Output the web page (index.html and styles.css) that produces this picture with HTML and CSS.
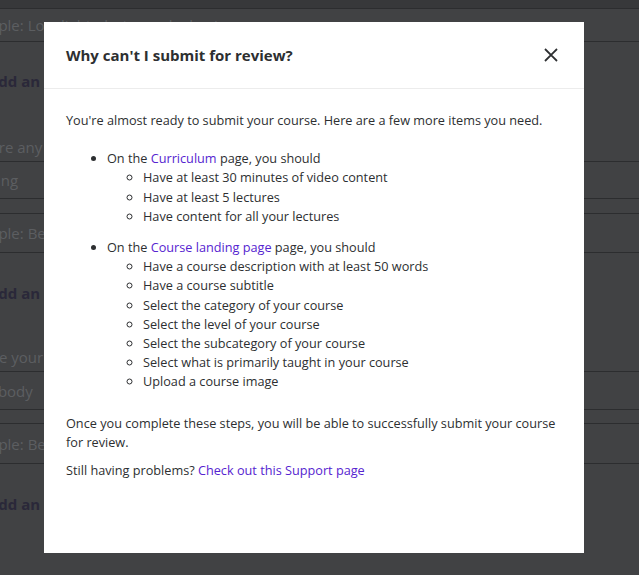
FILE: index.html
```html
<!DOCTYPE html>
<html lang="en">
<head>
    <meta charset="UTF-8">
    <meta name="viewport" content="width=device-width, initial-scale=1.0">
    <title>Intended learners</title>
    <link rel="stylesheet" href="styles.css">
</head>
<body>
    <div class="page">
        <div class="topbar"></div>
        <div class="form">
            <div class="field field-first"><span class="placeholder">Example: Low-light photography basics</span></div>
            <a class="add-link add-first"><span class="plus">+</span>Add an answer</a>
            <div class="label label-first">Share any course requirements or prerequisites</div>
            <div class="field field-a">Drawing</div>
            <div class="field field-b"><span class="placeholder">Example: Beginner photographers</span></div>
            <a class="add-link add-second"><span class="plus">+</span>Add an answer</a>
            <div class="label label-second">Rate your target students</div>
            <div class="field field-d">Everybody</div>
            <div class="field field-c"><span class="placeholder">Example: Beginner photographers</span></div>
            <a class="add-link add-third"><span class="plus">+</span>Add an answer</a>
        </div>
    </div>

    <div class="modal">
        <div class="modal-header">
            <h2>Why can't I submit for review?</h2>
            <button class="close" aria-label="Close">
                <svg width="14" height="14" viewBox="0 0 14 14">
                    <path d="M1 1 L13 13 M13 1 L1 13" stroke="#2d2f31" stroke-width="1.8" fill="none"/>
                </svg>
            </button>
        </div>
        <div class="modal-body">
            <p>You're almost ready to submit your course. Here are a few more items you need.</p>
            <ul class="steps">
                <li>On the <a href="#">Curriculum</a> page, you should
                    <ul>
                        <li>Have at least 30 minutes of video content</li>
                        <li>Have at least 5 lectures</li>
                        <li>Have content for all your lectures</li>
                    </ul>
                </li>
                <li>On the <a href="#">Course landing page</a> page, you should
                    <ul>
                        <li>Have a course description with at least 50 words</li>
                        <li>Have a course subtitle</li>
                        <li>Select the category of your course</li>
                        <li>Select the level of your course</li>
                        <li>Select the subcategory of your course</li>
                        <li>Select what is primarily taught in your course</li>
                        <li>Upload a course image</li>
                    </ul>
                </li>
            </ul>
            <p class="done">Once you complete these steps, you will be able to successfully submit your course for review.</p>
            <p class="help">Still having problems? <a href="#">Check out this Support page</a></p>
        </div>
    </div>
</body>
</html>
```

FILE: styles.css
```css
body {
    margin: 0;
    background-color: #414244;
    font-family: "Open Sans", Arial, sans-serif;
    overflow: hidden;
    height: 575px;
}
.topbar {
    height: 8px;
    background-color: #37383a;
}
.form {
    margin-left: -24px;
    width: 720px;
}
.field {
    margin-left: -33px;
    padding: 0 16px;
    border: 1px solid #2c2d2f;
    display: flex;
    align-items: center;
    font-size: 15px;
    color: #5c5e61;
    box-sizing: border-box;
}
.placeholder {
    color: #5c5e61;
}
.field-first {
    height: 34px;
}
.field-a {
    height: 38px;
}
.field-b {
    height: 40px;
    margin-top: 14px;
}
.field-d {
    height: 39px;
}
.field-c {
    height: 41px;
    margin-top: 13px;
}
.add-link {
    display: flex;
    align-items: center;
    gap: 4px;
    font-weight: bold;
    font-size: 15px;
    line-height: 20px;
    color: #2a2839;
    height: 20px;
}
.plus {
    font-size: 14px;
}
.add-first {
    margin-top: 29px;
}
.add-second {
    margin-top: 30px;
}
.add-third {
    margin-top: 30px;
}
.label {
    font-size: 15px;
    color: #5c5e61;
    height: 20px;
    line-height: 20px;
}
.label-first {
    margin-top: 46px;
    margin-bottom: 4px;
    margin-left: -3px;
}
.label-second {
    margin-top: 44px;
    margin-bottom: 4px;
}

.modal {
    position: fixed;
    left: 44px;
    top: 22px;
    width: 540px;
    height: 531px;
    background-color: #ffffff;
    color: #2d2f31;
}
.modal-header {
    height: 67px;
    border-bottom: 1px solid #ececec;
    display: flex;
    align-items: center;
    justify-content: space-between;
    padding: 0 26px 0 22px;
    box-sizing: border-box;
}
.modal-header h2 {
    margin: 0;
    font-size: 15px;
    font-weight: bold;
}
.close {
    background: none;
    border: none;
    padding: 0;
    width: 14px;
    height: 14px;
    cursor: pointer;
}
.close svg {
    display: block;
}
.modal-body {
    padding: 22px 22px 0 22px;
    font-size: 12.7px;
    line-height: 19.2px;
}
.modal-body p {
    margin: 0;
}
.modal-body a {
    color: #5624d0;
    text-decoration: none;
}
.steps {
    margin: 19px 0 22px 0;
    padding-left: 41px;
}
.steps > li + li {
    margin-top: 12px;
}
.steps ul {
    margin: 0;
    padding-left: 36px;
    list-style-type: circle;
}
.help {
    margin-top: 9px !important;
}
```
